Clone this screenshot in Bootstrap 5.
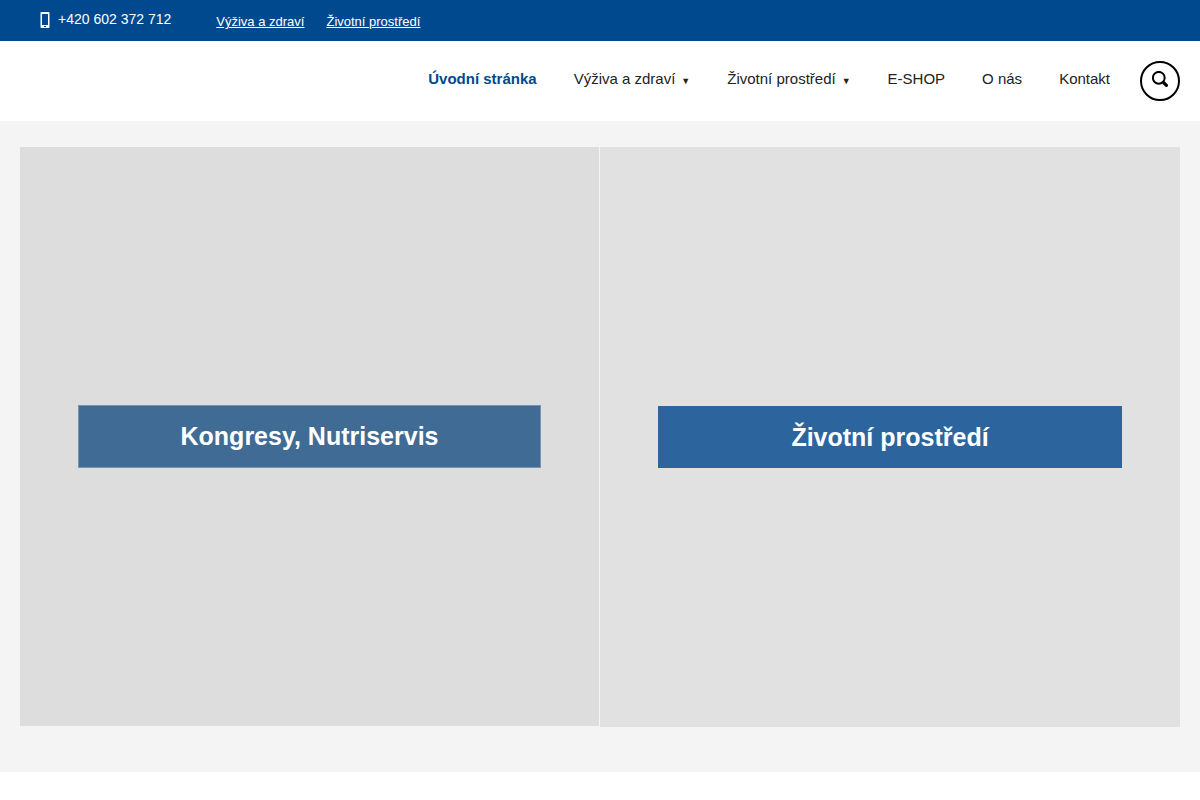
<!DOCTYPE html>
<html lang="cs">
<head>
<meta charset="utf-8">
<meta name="viewport" content="width=device-width, initial-scale=1">
<title>Úvodní stránka</title>
<link href="https://cdn.jsdelivr.net/npm/bootstrap@5.3.0/dist/css/bootstrap.min.css" rel="stylesheet">
<style>
body { font-family: "Liberation Sans", Arial, sans-serif; font-size: 15px; line-height: 20px; color: #222; background: #fff; }
.topbar { background: #00498f; min-height: 41px; padding: 9px 40px; color: #fff; }
.phone-link { font-size: 14px; gap: 8px; margin-right: 45px; }
.phone-link svg { margin-top: 2px; }
.top-links { font-size: 13px; gap: 22px; padding-top: 3px; }
.site-header { min-height: 80px; padding: 20px; gap: 30px; }
.main-menu { column-gap: 37px; row-gap: 8px; padding-bottom: 3px; }
.main-menu .nav-link { padding: 0; color: #222; }
.main-menu .nav-link.active { color: #00498f; font-weight: bold; }
.caret { font-size: 9px; margin-left: 6px; }
.search-btn { width: 40px; height: 40px; border: 2px solid #000; border-radius: 50%; background: #fff; padding: 0 0 4px; }
.tiles-area { background: #f4f4f4; padding: 26px 20px 45px; }
.tile { aspect-ratio: 1; color: #fff; }
.tile-congress { background: #ddd; margin-right: 1px; }
.tile-environment { background: #e1e1e1; }
.tile-label { width: 80%; padding: 16px; font-size: 25px; line-height: 30px; font-weight: bold; text-align: center; }
.tile-congress .tile-label { background: #3f6b94; border: 1px solid #7795b0; padding: 15px; line-height: 31px; }
.tile-environment .tile-label { background: #2c659e; }
</style>
</head>
<body>
<div class="topbar d-flex flex-wrap align-items-start">
  <a href="tel:+420602372712" class="phone-link d-flex align-items-center text-white text-decoration-none">
    <svg width="10" height="16" viewBox="0 0 10 16" aria-hidden="true"><path fill="#fff" fill-rule="evenodd" d="M1.500 0h7q1 0 1 1v14q0 1-1 1h-7q-1 0-1-1V1q0-1 1-1zM2 2v11h6V2zM4 14v1h2v-1z"/></svg>
    <span>+420 602 372 712</span>
  </a>
  <nav class="top-links d-flex flex-wrap" aria-label="Rychlé odkazy">
    <a href="#vyziva" class="text-white">Výživa a zdraví</a>
    <a href="#prostredi" class="text-white">Životní prostředí</a>
  </nav>
</div>
<header class="site-header d-flex align-items-center justify-content-end">
  <nav class="main-menu nav justify-content-end" aria-label="Hlavní menu">
    <a class="nav-link active" href="#" aria-current="page">Úvodní stránka</a>
    <a class="nav-link" href="#vyziva">Výživa a zdraví<span class="caret">▼</span></a>
    <a class="nav-link" href="#prostredi">Životní prostředí<span class="caret">▼</span></a>
    <a class="nav-link" href="#eshop">E-SHOP</a>
    <a class="nav-link" href="#onas">O nás</a>
    <a class="nav-link" href="#kontakt">Kontakt</a>
  </nav>
  <button type="button" class="search-btn d-flex align-items-center justify-content-center flex-shrink-0" aria-label="Hledat">
    <svg width="16" height="16" viewBox="0 0 16 16" fill="none" stroke="#000" aria-hidden="true"><circle cx="6.800" cy="6.800" r="5.900" stroke-width="2"/><path d="M10.500 10.500l1.500 1.500" stroke-width="2"/><path d="M12 12l2.400 2.400" stroke-width="3.200" stroke-linecap="round"/></svg>
  </button>
</header>
<main class="tiles-area">
  <div class="row g-0 align-items-start">
    <div class="col-6"><a id="vyziva" href="#vyziva" class="tile tile-congress d-flex align-items-center justify-content-center text-decoration-none"><span class="tile-label">Kongresy, Nutriservis</span></a></div>
    <div class="col-6"><a id="prostredi" href="#prostredi" class="tile tile-environment d-flex align-items-center justify-content-center text-decoration-none"><span class="tile-label">Životní prostředí</span></a></div>
  </div>
</main>
<script src="https://cdn.jsdelivr.net/npm/bootstrap@5.3.0/dist/js/bootstrap.bundle.min.js"></script>
</body>
</html>
